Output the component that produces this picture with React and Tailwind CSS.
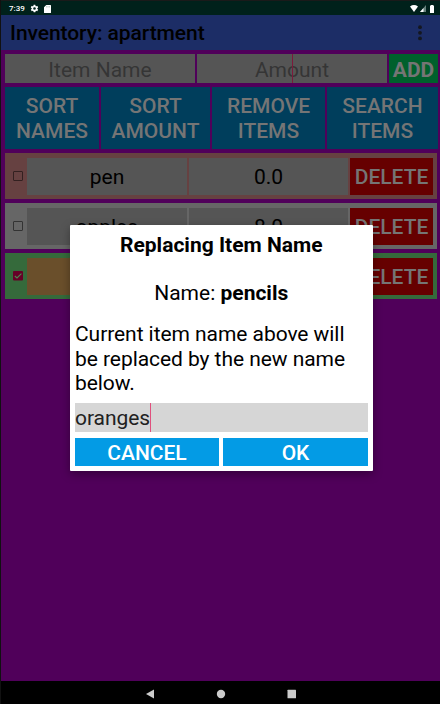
import { useState } from "react";
import clsx from "clsx";

const initialItems = [
  { id: 1, name: "pen", amount: "0.0", checked: false, row: "bg-[#664141]", cell: "bg-[#555555]" },
  { id: 2, name: "apples", amount: "8.0", checked: false, row: "bg-[#666666]", cell: "bg-[#555555]" },
  { id: 3, name: "", amount: "", checked: true, row: "bg-[#356a3b]", cell: "bg-[#6a4f2b]" },
];

const StatusBar = () => (
  <div className="flex h-[15px] shrink-0 items-center border-t border-[#1a1a1a] bg-[#00211b] pl-[8px] pr-[6px] pt-[1px] text-white">
    <span className="w-[21px] text-[8px] font-medium leading-none">7:39</span>
    <svg className="h-[9px] w-[9px]" viewBox="0 0 24 24" fill="currentColor">
      <path d="M19.4 13a7.5 7.5 0 0 0 0-2l2.2-1.7a.5.5 0 0 0 .1-.6l-2-3.5a.5.5 0 0 0-.6-.2l-2.6 1a7.6 7.6 0 0 0-1.7-1l-.4-2.6a.5.5 0 0 0-.5-.4h-4a.5.5 0 0 0-.5.4L9 5a7.6 7.6 0 0 0-1.7 1l-2.5-1a.5.5 0 0 0-.6.2l-2 3.5a.5.5 0 0 0 .1.6L4.6 11a7.5 7.5 0 0 0 0 2l-2.2 1.7a.5.5 0 0 0-.1.6l2 3.5a.5.5 0 0 0 .6.2l2.5-1a7.6 7.6 0 0 0 1.7 1l.4 2.6a.5.5 0 0 0 .5.4h4a.5.5 0 0 0 .5-.4l.4-2.6a7.6 7.6 0 0 0 1.7-1l2.5 1a.5.5 0 0 0 .6-.2l2-3.5a.5.5 0 0 0-.1-.6zM12 15.5a3.5 3.5 0 1 1 0-7 3.5 3.5 0 0 1 0 7z" />
    </svg>
    <svg className="ml-[5px] h-[8px] w-[7px]" viewBox="0 0 7 8">
      <path d="M2.3 0H6.5q.5 0 .5.5V7.5q0 .5-.5.5H.5Q0 8 0 7.5V2.3z" fill="#fff" />
      <path d="M2.6 1v1.5M4 1v1.5M5.4 1v1.5" stroke="#8a9c99" strokeWidth=".5" />
    </svg>
    <svg className="ml-auto h-[7px] w-[8px]" viewBox="0 0 8 7">
      <path d="M4 7 0 1.4Q4-1.2 8 1.4z" fill="#fff" />
    </svg>
    <svg className="ml-[2px] h-[7px] w-[6px]" viewBox="0 0 6 7">
      <path d="M6 0v7H0z" fill="#66807b" />
      <path d="M3.5 3v4H0z" fill="#fff" />
    </svg>
    <svg className="ml-[4px] h-[8px] w-[4px]" viewBox="0 0 4 8">
      <path d="M1 0h2v.6h1V8H0V.6h1z" fill="#fff" />
    </svg>
  </div>
);

const AppBar = ({ title }) => (
  <div className="flex h-[35px] shrink-0 items-center justify-between bg-[#1c2d66] pl-[9px] pr-[18px] pt-[2px]">
    <h1 className="text-[21px] font-medium leading-none tracking-[-0.06px] text-black">{title}</h1>
    <svg className="mb-[2px] h-[16px] w-[4px]" viewBox="0 0 4 16" fill="#14171f">
      <circle cx="2" cy="2.2" r="1.9" />
      <circle cx="2" cy="7.8" r="1.9" />
      <circle cx="2" cy="13.4" r="1.9" />
    </svg>
  </div>
);

const Checkbox = ({ checked }) => (
  <svg className="ml-[8px] mr-[4px] h-[10px] w-[10px] shrink-0" viewBox="0 0 10 10">
    {checked ? (
      <>
        <rect width="10" height="9.5" rx="1" fill="#660027" />
        <path d="M1.8 5 4 7 8.4 2.7" fill="none" stroke="#4b8750" strokeWidth="1.1" />
      </>
    ) : (
      <rect x=".5" y=".5" width="9" height="9" rx=".6" fill="none" stroke="#000" strokeOpacity=".5" />
    )}
  </svg>
);

const ItemRow = ({ item }) => (
  <div className={clsx("flex h-[46px] items-center pr-[4px]", item.row)}>
    <Checkbox checked={item.checked} />
    <div className={clsx("flex h-[37px] w-[160px] items-center justify-center pt-[3px]", item.cell)}>{item.name}</div>
    <div className={clsx("ml-[2px] flex h-[37px] w-[159px] items-center justify-center pt-[3px]", item.cell)}>
      {item.amount}
    </div>
    <button className="ml-[2px] h-[37px] w-[83px] bg-[#660000] pt-[3px] font-medium text-[#757575]">DELETE</button>
  </div>
);

const SortButton = ({ top, bottom, width }) => (
  <button className={clsx("h-[62px] bg-[#003e5c] pt-[1px] font-medium leading-[25px] text-[#757575]", width)}>
    {top}
    <br />
    {bottom}
  </button>
);

const ReplaceDialog = ({ current, value, onChange }) => (
  <div className="absolute left-[69px] top-[225px] flex h-[246px] w-[302.5px] flex-col rounded-[1px] bg-white px-[5px] text-black shadow-[0_3px_10px_rgba(0,0,0,0.35)]">
    <h2 className="mt-[8px] text-center font-bold leading-[24px]">Replacing Item Name</h2>
    <p className="mt-[24px] text-center leading-[24px]">
      Name: <b>{current}</b>
    </p>
    <p className="mt-[17px] leading-[24.5px] tracking-[-0.06px]">
      Current item name above will
      <br />
      be replaced by the new name
      <br />
      below.
    </p>
    <div className="relative mt-[7px] h-[29px] w-[293px] bg-[#d6d6d6]">
      <input
        className="block h-full w-full pt-[2px] tracking-[-0.06px] text-[#212121] outline-none"
        value={value}
        onChange={(e) => onChange(e.target.value)}
      />
      <span className="absolute left-[75px] top-0 h-full w-px bg-[#e0507d]" />
    </div>
    <div className="mt-[6px] flex w-[293px] gap-[4px] font-medium text-white">
      <button className="h-[28px] w-[144px] bg-[#039be5] pt-[3px] leading-none">CANCEL</button>
      <button className="h-[28px] w-[145px] bg-[#039be5] pt-[3px] leading-none">OK</button>
    </div>
  </div>
);

const NavBar = () => (
  <div className="flex h-[23px] shrink-0 items-center bg-black pl-[145px] pt-[3px]">
    <svg className="h-[10px] w-[150px]" viewBox="0 0 150 10" fill="#cccccc">
      <path d="M8 .5v9L0 5z" />
      <circle cx="75" cy="5" r="4.2" />
      <rect x="141.5" y=".8" width="8.5" height="8.5" rx=".5" />
    </svg>
  </div>
);

const App = () => {
  const [newName, setNewName] = useState("oranges");

  return (
    <div className="relative flex h-[704px] w-[440px] flex-col overflow-hidden border-l border-[#111111] bg-[#50005a] font-['Roboto',sans-serif] text-[21px] text-black">
      <StatusBar />
      <AppBar title="Inventory: apartment" />

      <main className="flex flex-1 flex-col pl-[4px] pt-[4px]">
        <div className="flex gap-[2px] leading-none">
          <div className="flex h-[29px] w-[190px] items-center justify-center bg-[#555555] pt-[3px] text-[#353535]">
            Item Name
          </div>
          <div className="relative flex h-[29px] w-[190px] items-center justify-center bg-[#555555] pt-[3px] text-[#353535]">
            Amount
            <span className="absolute left-[95px] top-0 h-full w-px bg-[#7a1a3b]" />
          </div>
          <button className="h-[29px] w-[49px] bg-[#00602c] pt-[3px] font-bold text-[#757575]">ADD</button>
        </div>

        <div className="mt-[4px] flex gap-[2px]">
          <SortButton top="SORT" bottom="NAMES" width="w-[94px]" />
          <SortButton top="SORT" bottom="AMOUNT" width="w-[109px]" />
          <SortButton top="REMOVE" bottom="ITEMS" width="w-[113px]" />
          <SortButton top="SEARCH" bottom="ITEMS" width="w-[111px]" />
        </div>

        <div className="mt-[4px] flex w-[432px] flex-col gap-[4px] leading-none">
          {initialItems.map((item) => (
            <ItemRow key={item.id} item={item} />
          ))}
        </div>
      </main>

      <NavBar />
      <ReplaceDialog current="pencils" value={newName} onChange={setNewName} />
    </div>
  );
};

export default App;
